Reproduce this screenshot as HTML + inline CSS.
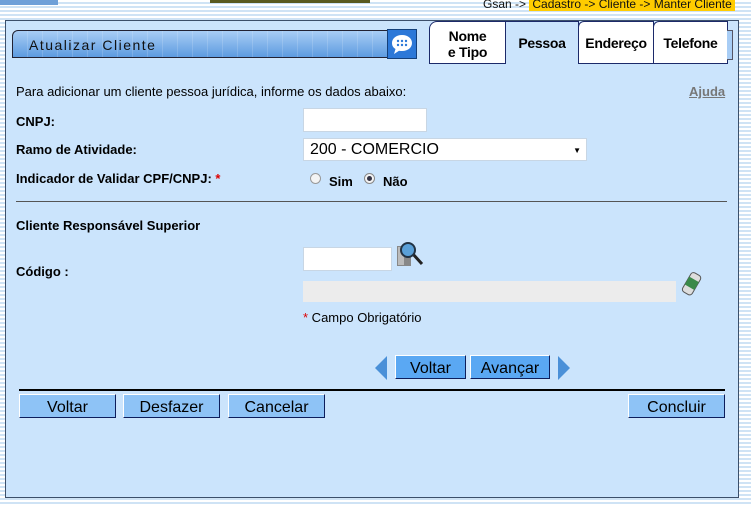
<!DOCTYPE html>
<html><head><meta charset="utf-8"><style>
*{margin:0;padding:0;box-sizing:border-box}
body{width:751px;height:506px;overflow:hidden;font-family:"Liberation Sans",Arial,sans-serif;font-size:13px;color:#000;
background:repeating-linear-gradient(#fff 0 2px,#cfe3f5 2px 4px);position:relative}
.abs{position:absolute}
.panel{left:5px;top:20px;width:734px;height:478px;background:#cbe4fc;border:1px solid #3c4f6a}
.title{left:12px;top:30px;width:405px;height:28px;border:1px solid #223;border-radius:6px 0 0 0;
background:repeating-linear-gradient(90deg,rgba(255,255,255,0) 0 14px,rgba(255,255,255,.15) 14px 15px),linear-gradient(#a8cdf5,#5d9be0);font-size:14px;letter-spacing:1.5px;color:#111;padding:6px 0 0 16px}
.tab{top:21px;height:43px;background:#fff;border:1px solid #1c2a6a;font-weight:bold;font-size:14px;text-align:center;font-family:"Liberation Sans Narrow","Liberation Sans",sans-serif;letter-spacing:-0.3px}
.lbl{left:16px;font-weight:bold;font-size:13px}
.inp{background:#fff;border:1px solid #c8d6e4;height:24px}
.btn,.btn2{height:24px;border:1px solid #0d1e5c;border-top-color:#fff;border-left-color:#fff;font-size:16px;text-align:center;line-height:25px;color:#000;font-family:"Liberation Sans Narrow","Liberation Sans",sans-serif}
.btn{background:#8ec3f6}
.btn2{background:#5aa8f3}
</style></head><body>
<div class="abs" style="left:0;top:0;width:58px;height:5px;background:#6fa0d8"></div>
<div class="abs" style="left:210px;top:0;width:160px;height:3px;background:#5a5a20"></div>
<div class="abs" style="left:483px;top:-3px;font-size:12px;color:#111">Gsan -&gt; <span style="background:#fc0;padding:0 3px">Cadastro -&gt; Cliente -&gt; Manter Cliente</span></div>
<div class="abs panel"></div>
<div class="abs title">Atualizar Cliente</div>
<div class="abs" style="left:387px;top:29px;width:30px;height:30px;background:#2c78d8;border:1px solid #14407a">
<svg width="28" height="28" viewBox="0 0 28 28"><path d="M14 5c6 0 10 3.5 10 8s-4 8-10 8c-1 0-2 0-3-.3L6 24l1.5-5C5 17.5 4 15.5 4 13c0-4.5 4-8 10-8z" fill="#fff"/><g fill="#2c78d8"><circle cx="10" cy="11" r="1.2"/><circle cx="14" cy="11" r="1.2"/><circle cx="18" cy="11" r="1.2"/><circle cx="10" cy="15" r="1.2"/><circle cx="14" cy="15" r="1.2"/><circle cx="18" cy="15" r="1.2"/></g></svg></div>
<div class="abs tab" style="left:429px;width:77px;padding-top:6px;line-height:16px;border-radius:8px 0 0 0">Nome<br>e Tipo</div>
<div class="abs tab" style="left:505px;width:74px;background:#cbe4fc;border-bottom:none;padding-top:13px">Pessoa</div>
<div class="abs tab" style="left:578px;width:76px;padding-top:13px;border-radius:6px 0 0 0">Endereço</div>
<div class="abs tab" style="left:653px;width:75px;padding-top:13px;border-radius:6px 0 0 0">Telefone</div>
<div class="abs" style="left:727px;top:30px;width:6px;height:30px;background:#a8cdf5;border:1px solid #556;border-left:none"></div>

<div class="abs" style="left:16px;top:84px">Para adicionar um cliente pessoa jurídica, informe os dados abaixo:</div>
<div class="abs" style="left:689px;top:84px;font-weight:bold;color:#777;text-decoration:underline">Ajuda</div>
<div class="abs lbl" style="top:114px">CNPJ:</div>
<div class="abs inp" style="left:303px;top:108px;width:124px"></div>
<div class="abs lbl" style="top:142px">Ramo de Atividade:</div>
<div class="abs inp" style="left:303px;top:138px;width:284px;height:23px;font-size:16px;padding:2px 0 0 6px">200 - COMERCIO<span style="position:absolute;right:5px;top:7px;font-size:8px">▼</span></div>
<div class="abs lbl" style="top:171px">Indicador de Validar CPF/CNPJ: <span style="color:#d00">*</span></div>
<div class="abs" style="left:310px;top:173px;width:11px;height:11px;border-radius:50%;border:1px solid #999;background:#f4f4f4"></div>
<div class="abs" style="left:329px;top:174px;font-weight:bold">Sim</div>
<div class="abs" style="left:364px;top:173px;width:11px;height:11px;border-radius:50%;border:1px solid #888;background:#f4f4f4"><div style="margin:2px;width:5px;height:5px;border-radius:50%;background:#334"></div></div>
<div class="abs" style="left:383px;top:174px;font-weight:bold">Não</div>
<div class="abs" style="left:16px;top:201px;width:711px;height:1px;background:#555"></div>
<div class="abs lbl" style="top:218px">Cliente Responsável Superior</div>
<div class="abs lbl" style="top:264px">Código :</div>
<div class="abs inp" style="left:303px;top:247px;width:89px"></div>
<svg class="abs" style="left:396px;top:240px" width="30" height="28" viewBox="0 0 30 28"><rect x="1" y="6" width="14" height="20" fill="#888"/><rect x="2" y="7" width="6" height="18" fill="#bbb"/><line x1="16" y1="13" x2="26" y2="24" stroke="#222" stroke-width="3"/><circle cx="12" cy="10" r="7" fill="#5aa0d8" stroke="#234" stroke-width="2"/></svg>
<div class="abs" style="left:303px;top:281px;width:373px;height:21px;background:#ececec"></div>
<svg class="abs" style="left:680px;top:271px" width="24" height="26" viewBox="0 0 24 26"><g transform="rotate(30 12 13)"><rect x="6" y="2" width="11" height="22" rx="3" fill="#ddd" stroke="#555"/><rect x="6" y="8" width="11" height="9" fill="#3a8a4a"/></g></svg>
<div class="abs" style="left:303px;top:310px"><span style="color:#d00">*</span> Campo Obrigatório</div>
<svg class="abs" style="left:374px;top:355px" width="14" height="26"><path d="M13 1L1 13l12 12z" fill="#4a90d8"/></svg>
<div class="abs btn2" style="left:395px;top:355px;width:71px">Voltar</div>
<div class="abs btn2" style="left:470px;top:355px;width:80px">Avançar</div>
<svg class="abs" style="left:557px;top:355px" width="14" height="26"><path d="M1 1l12 12L1 25z" fill="#4a90d8"/></svg>
<div class="abs" style="left:19px;top:389px;width:706px;height:2px;background:#000"></div>
<div class="abs btn" style="left:19px;top:394px;width:97px">Voltar</div>
<div class="abs btn" style="left:123px;top:394px;width:97px">Desfazer</div>
<div class="abs btn" style="left:228px;top:394px;width:97px">Cancelar</div>
<div class="abs btn" style="left:628px;top:394px;width:97px">Concluir</div>
</body></html>
